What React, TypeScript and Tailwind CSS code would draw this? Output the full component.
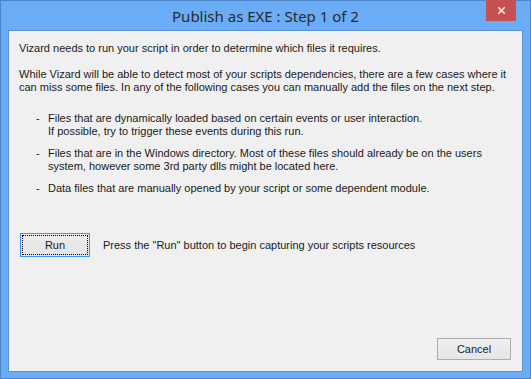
import { X } from "lucide-react";

const BULLETS: string[][] = [
  [
    "Files that are dynamically loaded based on certain events or user interaction.",
    "If possible, try to trigger these events during this run.",
  ],
  [
    "Files that are in the Windows directory. Most of these files should already be on the users",
    "system, however some 3rd party dlls might be located here.",
  ],
  ["Data files that are manually opened by your script or some dependent module."],
];

function Bullet({ lines }: { lines: string[] }) {
  return (
    <div className="flex">
      <span className="w-[29px] pl-[17px]">-</span>
      <div className="flex flex-col">
        {lines.map((line) => (
          <span key={line} className="whitespace-nowrap">
            {line}
          </span>
        ))}
      </div>
    </div>
  );
}

export default function App() {
  return (
    <div className="h-[379px] w-[531px] overflow-hidden bg-white">
      <div className="flex h-full w-full flex-col border border-[#4d86c8] bg-[#6aacf5]">
        <div className="relative flex h-[29px] items-center justify-center">
          <span className="pt-[1px] font-['Noto_Sans',sans-serif] text-[15px] text-[#2b2b2b]">
            Publish as EXE : Step 1 of 2
          </span>
          <div className="absolute right-[14px] top-[-1px] flex h-[21px] w-[30px] items-center justify-center bg-[#c75050]">
            <X className="h-[11px] w-[11px] text-white" strokeWidth={3} />
          </div>
        </div>
        <div className="mx-[7px] mb-[6px] flex flex-1 flex-col border border-[#5a90d0] bg-[#f0f0f0] font-['Liberation_Sans',sans-serif] text-[11px] leading-[13px] text-[#1a1a1a]">
          <div className="px-[10px] pt-[11px]">
            <p className="whitespace-nowrap">
              Vizard needs to run your script in order to determine which files it requires.
            </p>
            <p className="mt-[13px] whitespace-nowrap">
              While Vizard will be able to detect most of your scripts dependencies, there are a few cases where it
              <br />
              can miss some files. In any of the following cases you can manually add the files on the next step.
            </p>
            <div className="mt-[18px] flex flex-col gap-[9px]">
              {BULLETS.map((lines) => (
                <Bullet key={lines[0]} lines={lines} />
              ))}
            </div>
          </div>
          <div className="mt-[38px] flex items-center pl-[11px]">
            <button className="flex h-[24px] w-[70px] items-center justify-center border border-[#3399ff] bg-gradient-to-b from-[#ececec] to-[#e4e4e4] p-[1px]">
              <span className="flex h-full w-full items-center justify-center border border-dotted border-black">
                Run
              </span>
            </button>
            <span className="ml-[13px] whitespace-nowrap">
              Press the "Run" button to begin capturing your scripts resources
            </span>
          </div>
          <div className="mt-auto flex justify-end pb-[11px] pr-[11px]">
            <button className="flex h-[22px] w-[74px] items-center justify-center border border-[#adadad] bg-gradient-to-b from-[#f0f0f0] to-[#e5e5e5]">
              Cancel
            </button>
          </div>
        </div>
      </div>
    </div>
  );
}
